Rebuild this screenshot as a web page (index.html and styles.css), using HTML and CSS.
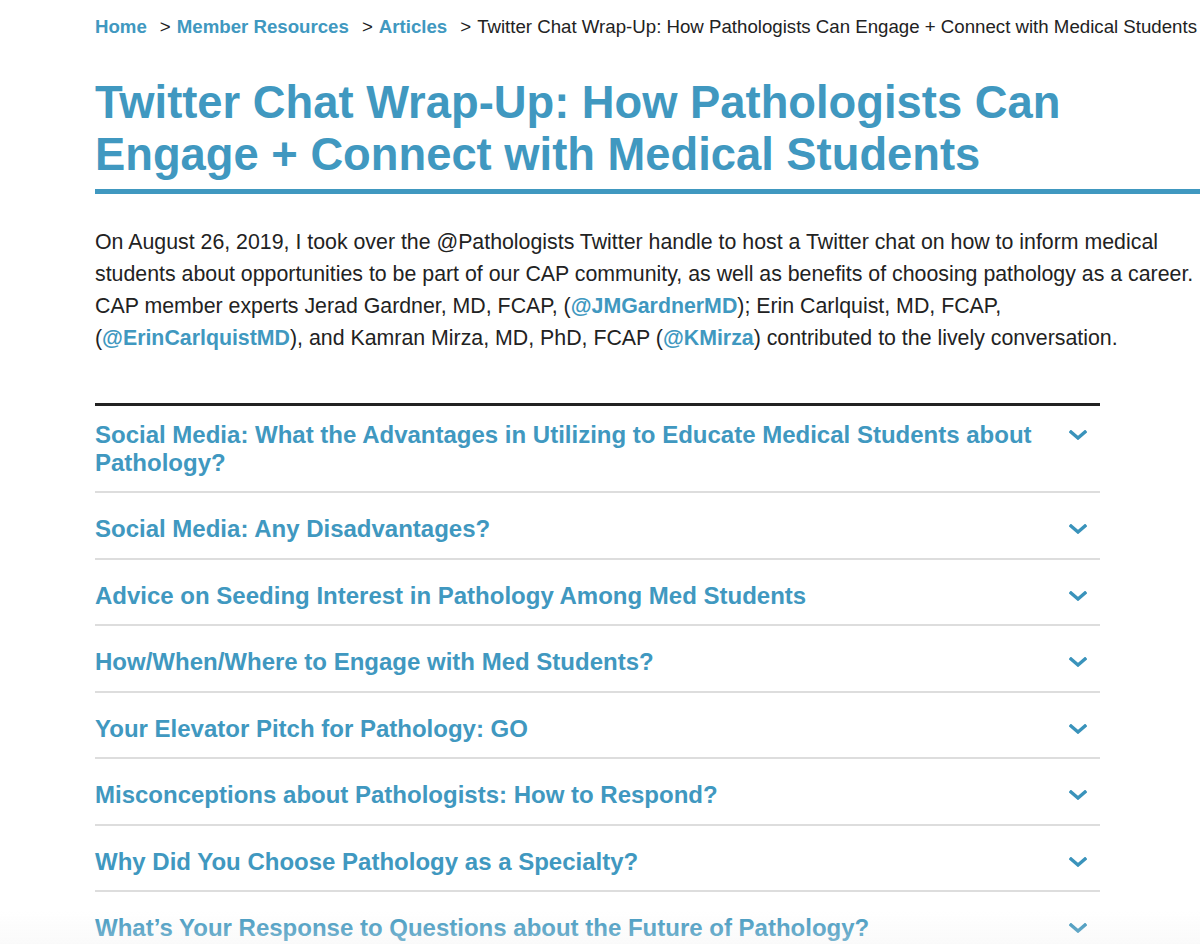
FILE: index.html
```html
<!DOCTYPE html>
<html lang="en">
<head>
<meta charset="utf-8">
<title>Twitter Chat Wrap-Up</title>
<link rel="stylesheet" href="styles.css">
</head>
<body>
<div class="page">
  <nav class="crumbs">
    <a href="#" class="crumb-link">Home</a>
    <span class="sep">&gt;</span>
    <a href="#" class="crumb-link">Member Resources</a>
    <span class="sep">&gt;</span>
    <a href="#" class="crumb-link">Articles</a>
    <span class="sep">&gt;</span>
    <span class="crumb-current">Twitter Chat Wrap-Up: How Pathologists Can Engage + Connect with Medical Students</span>
  </nav>

  <h1 class="title">Twitter Chat Wrap-Up: How Pathologists Can Engage + Connect with Medical Students</h1>

  <p class="intro">On August 26, 2019, I took over the @Pathologists Twitter handle to host a Twitter chat on how to inform medical students about opportunities to be part of our CAP community, as well as benefits of choosing pathology as a career. CAP member experts Jerad Gardner, MD, FCAP, (<a href="#" class="handle">@JMGardnerMD</a>); Erin Carlquist, MD, FCAP, (<a href="#" class="handle">@ErinCarlquistMD</a>), and Kamran Mirza, MD, PhD, FCAP (<a href="#" class="handle">@KMirza</a>) contributed to the lively conversation.</p>

  <div class="accordion">
    <div class="acc-item">
      <div class="acc-title">Social Media: What the Advantages in Utilizing to Educate Medical Students about Pathology?</div>
      <svg class="chev" viewBox="0 0 18 10" width="18" height="10"><polyline points="2,2 9,8 16,2"/></svg>
    </div>
    <div class="acc-item">
      <div class="acc-title">Social Media: Any Disadvantages?</div>
      <svg class="chev" viewBox="0 0 18 10" width="18" height="10"><polyline points="2,2 9,8 16,2"/></svg>
    </div>
    <div class="acc-item">
      <div class="acc-title">Advice on Seeding Interest in Pathology Among Med Students</div>
      <svg class="chev" viewBox="0 0 18 10" width="18" height="10"><polyline points="2,2 9,8 16,2"/></svg>
    </div>
    <div class="acc-item">
      <div class="acc-title">How/When/Where to Engage with Med Students?</div>
      <svg class="chev" viewBox="0 0 18 10" width="18" height="10"><polyline points="2,2 9,8 16,2"/></svg>
    </div>
    <div class="acc-item">
      <div class="acc-title">Your Elevator Pitch for Pathology: GO</div>
      <svg class="chev" viewBox="0 0 18 10" width="18" height="10"><polyline points="2,2 9,8 16,2"/></svg>
    </div>
    <div class="acc-item">
      <div class="acc-title">Misconceptions about Pathologists: How to Respond?</div>
      <svg class="chev" viewBox="0 0 18 10" width="18" height="10"><polyline points="2,2 9,8 16,2"/></svg>
    </div>
    <div class="acc-item">
      <div class="acc-title">Why Did You Choose Pathology as a Specialty?</div>
      <svg class="chev" viewBox="0 0 18 10" width="18" height="10"><polyline points="2,2 9,8 16,2"/></svg>
    </div>
    <div class="acc-item">
      <div class="acc-title">What’s Your Response to Questions about the Future of Pathology?</div>
      <svg class="chev" viewBox="0 0 18 10" width="18" height="10"><polyline points="2,2 9,8 16,2"/></svg>
    </div>
  </div>
</div>
<div class="fade"></div>
</body>
</html>
```

FILE: styles.css
```css
html, body {
  margin: 0;
  padding: 0;
  background: #ffffff;
  overflow: hidden;
}

body {
  font-family: "Liberation Sans", Arial, sans-serif;
  color: #222222;
}

.page {
  padding: 16px 0 0 95px;
  width: 1110px;
}

.crumbs {
  display: flex;
  white-space: nowrap;
  font-size: 18.67px;
  line-height: 22px;
}

.crumb-link {
  color: #4098c0;
  font-weight: bold;
  text-decoration: none;
}

.sep {
  margin: 0 6px 0 13px;
  color: #222222;
}

.crumb-current {
  color: #222222;
}

.title {
  margin: 39px 0 0 0;
  padding-bottom: 8px;
  border-bottom: 5px solid #4098c0;
  color: #4098c0;
  font-size: 45.33px;
  line-height: 52px;
  font-weight: bold;
}

.intro {
  margin: 32px 0 0 0;
  font-size: 21.33px;
  line-height: 32px;
  color: #222222;
}

.handle {
  color: #4098c0;
  font-weight: bold;
  text-decoration: none;
}

.accordion {
  margin-top: 49px;
  width: 1005px;
  border-top: 3px solid #222222;
}

.acc-item {
  display: flex;
  align-items: flex-start;
  padding: 22px 0 14.5px 0;
  border-bottom: 2px solid #dddddd;
}

.acc-item:first-child {
  padding-top: 14.5px;
}

.acc-title {
  flex: 1;
  color: #4098c0;
  font-size: 24px;
  line-height: 28px;
  font-weight: bold;
}

.chev {
  flex: none;
  margin: 9px 13px 0 24px;
  fill: none;
  stroke: #3a93bb;
  stroke-width: 3.4;
  stroke-linecap: square;
  stroke-linejoin: miter;
}

.fade {
  position: fixed;
  left: 0;
  right: 0;
  bottom: 0;
  height: 34px;
  background: linear-gradient(to bottom, rgba(240, 240, 240, 0), rgba(240, 240, 240, 0.35));
  pointer-events: none;
}
```
